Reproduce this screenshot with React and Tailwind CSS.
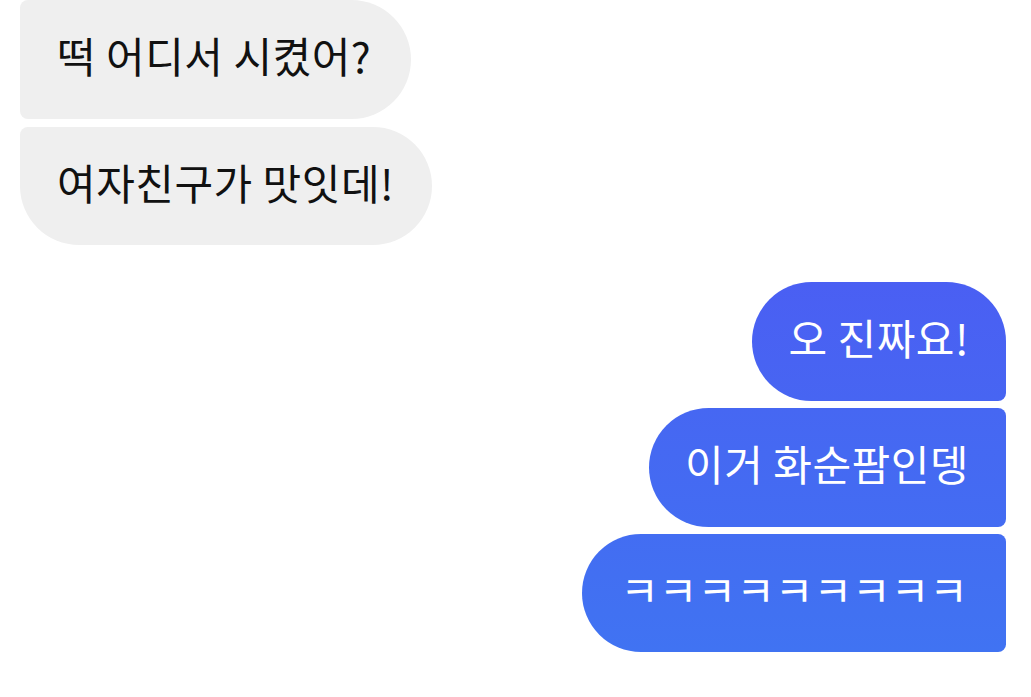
export default function App() {
  const font = { fontFamily: '"Noto Sans CJK KR", "Noto Sans", sans-serif' };
  return (
    <div className="w-[1031px] h-[697px] bg-white overflow-hidden" style={font}>
      <div className="flex flex-col items-start gap-[8px] pl-[20px]">
        <div className="h-[119px] flex items-center pl-[37px] pr-[40px] pb-[9px] bg-[#efefef] text-[#111] text-[42px] leading-none tracking-[0.5px] rounded-tl-[8px] rounded-bl-[8px] rounded-tr-[60px] rounded-br-[60px]">
          떡 어디서 시켰어?
        </div>
        <div className="h-[118px] flex items-center pl-[37px] pr-[38px] pb-[9px] bg-[#efefef] text-[#111] text-[42px] leading-none tracking-[0.5px] rounded-tl-[8px] rounded-bl-[60px] rounded-tr-[60px] rounded-br-[60px]">
          여자친구가 맛잇데!
        </div>
      </div>
      <div className="flex flex-col items-end gap-[7px] pr-[25px] mt-[37px]">
        <div className="h-[119px] flex items-center pl-[36px] pr-[37px] pb-[9px] bg-gradient-to-b from-[#4a5ff3] to-[#4765f2] text-white text-[42px] leading-none tracking-[0.5px] rounded-tl-[60px] rounded-bl-[60px] rounded-tr-[60px] rounded-br-[8px]">
          오 진짜요!
        </div>
        <div className="h-[119px] flex items-center pl-[36px] pr-[37px] pb-[9px] bg-gradient-to-b from-[#4667f2] to-[#436cf2] text-white text-[42px] leading-none tracking-[0.5px] rounded-tl-[60px] rounded-bl-[60px] rounded-tr-[8px] rounded-br-[8px]">
          이거 화순팜인뎅
        </div>
        <div className="h-[118px] flex items-center pl-[38px] pr-[38px] pb-[9px] bg-gradient-to-b from-[#436df2] to-[#4073f2] text-white text-[42px] leading-none rounded-tl-[60px] rounded-bl-[60px] rounded-tr-[8px] rounded-br-[8px]">
          ㅋㅋㅋㅋㅋㅋㅋㅋㅋ
        </div>
      </div>
    </div>
  );
}
